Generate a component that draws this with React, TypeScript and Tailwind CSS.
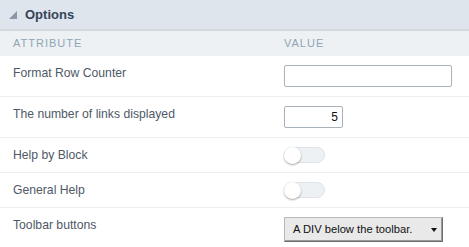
const rows: { label: string; kind: "text" | "number" | "toggle" | "select" }[] = [
  { label: "Format Row Counter", kind: "text" },
  { label: "The number of links displayed", kind: "number" },
  { label: "Help by Block", kind: "toggle" },
  { label: "General Help", kind: "toggle" },
  { label: "Toolbar buttons", kind: "select" },
];

function Toggle() {
  return (
    <div className="relative h-[16px] w-[41px] rounded-full border border-[#dde3e8] bg-[#edf1f4]">
      <div className="absolute left-[-1px] top-[-1px] h-[17px] w-[17px] rounded-full bg-white shadow-[0_1px_2px_rgba(0,0,0,0.35)]" />
    </div>
  );
}

function Value({ kind }: { kind: string }) {
  if (kind === "text")
    return <div className="h-[22px] w-[168px] rounded-[2px] border border-[#a9b1bb] bg-white" />;
  if (kind === "number")
    return (
      <div className="flex h-[22px] w-[59px] items-center justify-end rounded-[2px] border border-[#a9b1bb] bg-white pr-[4px] text-[12px] text-[#111]">
        5
      </div>
    );
  if (kind === "toggle") return <Toggle />;
  return (
    <div className="flex h-[25px] w-[159px] items-center justify-between whitespace-nowrap border border-[#b9b9b9] border-b-[#6f6f6f] border-r-[#6f6f6f] bg-[#e9e9e9] pl-[8px] pr-[5px] text-[11.2px] text-[#111] shadow-[inset_-1px_-1px_0_#9a9a9a]">
      <span>A DIV below the toolbar.</span>
      <span className="h-0 w-0 border-x-[3px] border-t-[4px] border-x-transparent border-t-[#111]" />
    </div>
  );
}

export default function App() {
  return (
    <div className="h-[247px] w-[469px] bg-white font-['Liberation_Sans',Arial,sans-serif]">
      <div className="flex h-[31px] items-center gap-[8px] border-b-2 border-[#d1d9df] bg-[#dfe5ec] pl-[9px]">
        <span className="h-0 w-0 border-b-[8px] border-l-[8px] border-l-transparent border-b-[#8b97a4]" />
        <span className="text-[13px] font-bold text-[#34445a]">Options</span>
      </div>
      <div className="grid h-[25px] grid-cols-[284px_1fr] items-center bg-[#edf1f4] text-[11px] tracking-[1px] text-[#8fa5b4]">
        <span className="pl-[13px]">ATTRIBUTE</span>
        <span>VALUE</span>
      </div>
      {rows.map((r, i) => (
        <div
          key={r.label}
          className={`grid grid-cols-[284px_1fr] ${i < rows.length - 1 ? "border-b border-[#eceff4]" : "border-b-2 border-[#d7dfe4]"}`}
        >
          <div className="pl-[13px] pt-[10px] text-[12.2px] leading-[14px] text-[#4f5866]">{r.label}</div>
          <div className={`py-[9px] ${i === rows.length - 1 ? "pb-[8px]" : ""}`}>
            <Value kind={r.kind} />
          </div>
        </div>
      ))}
    </div>
  );
}
